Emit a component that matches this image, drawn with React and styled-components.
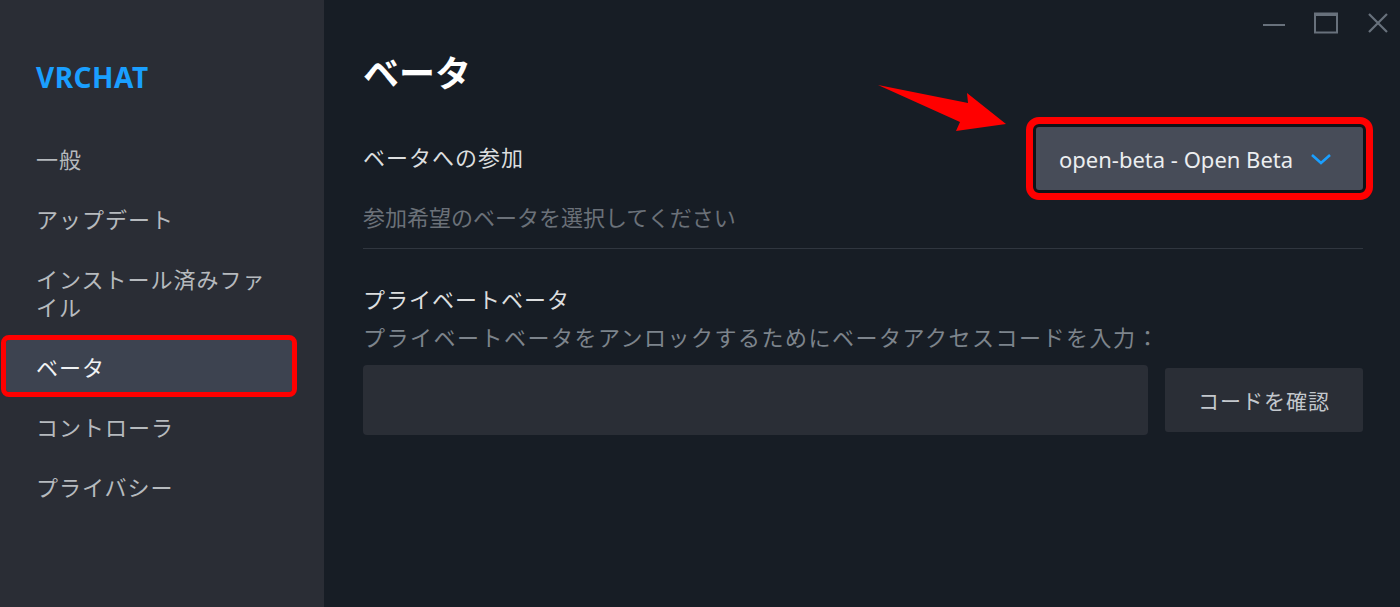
import React from "react";
import styled, { createGlobalStyle } from "styled-components";

const GlobalStyle = createGlobalStyle`
  html, body {
    margin: 0;
    padding: 0;
    background: #171d25;
  }
  body {
    font-family: "Noto Sans", "Noto Sans CJK JP", sans-serif;
  }
`;

const Window = styled.div`
  position: relative;
  width: 1400px;
  height: 607px;
  display: flex;
  overflow: hidden;
  background: #171d25;
`;

const Sidebar = styled.aside`
  width: 324px;
  flex-shrink: 0;
  background: #2a2d35;
  padding-top: 60px;
  box-sizing: border-box;
`;

const GameTitle = styled.div`
  padding-left: 36px;
  font-family: "Noto Sans", sans-serif;
  font-weight: 700;
  font-size: 28px;
  line-height: 34px;
  color: #1a9fff;
  letter-spacing: 0.5px;
`;

const Nav = styled.nav`
  margin-top: 38px;
  display: flex;
  flex-direction: column;
  gap: 8px;
`;

const NavItem = styled.div`
  width: 286px;
  margin-left: 6px;
  padding: 12px 12px 12px 30px;
  box-sizing: border-box;
  font-family: "Noto Sans CJK JP", sans-serif;
  font-size: 22px;
  line-height: 28px;
  letter-spacing: 1px;
  color: ${(p) => (p.$active ? "#f0f2f4" : "#b6babe")};
  background: ${(p) => (p.$active ? "#3d4350" : "transparent")};
  border-radius: 3px;
  outline: ${(p) => (p.$marked ? "5px solid #ff0000" : "none")};
  outline-offset: 0;
`;

const Main = styled.main`
  flex: 1;
  display: flex;
  flex-direction: column;
`;

const TitleBar = styled.div`
  height: 46px;
  display: flex;
  justify-content: flex-end;
  align-items: center;
  gap: 28px;
  padding-right: 10px;
`;

const WinButton = styled.div`
  width: 24px;
  height: 24px;
  display: flex;
  align-items: center;
  justify-content: center;
  color: #68717c;
`;

const Content = styled.div`
  padding: 0 37px 0 39px;
  display: flex;
  flex-direction: column;
`;

const PageTitle = styled.h1`
  margin: 3px 0 0;
  font-family: "Noto Sans CJK JP", sans-serif;
  font-weight: 700;
  font-size: 36px;
  line-height: 44px;
  color: #ffffff;
`;

const Row = styled.div`
  margin-top: 34px;
  display: flex;
  align-items: center;
  justify-content: space-between;
`;

const Label = styled.div`
  font-family: "Noto Sans CJK JP", sans-serif;
  font-size: 22px;
  line-height: 30px;
  letter-spacing: 1px;
  color: #dcdedf;
`;

const RowLabel = styled(Label)`
  margin-bottom: 5px;
`;

const Dropdown = styled.div`
  width: 327px;
  height: 63px;
  box-sizing: border-box;
  padding: 0 31px 0 23px;
  display: flex;
  align-items: center;
  justify-content: space-between;
  background: #474c58;
  border-radius: 3px;
  box-shadow: 0 0 0 3px #0f1318;
  outline: 7px solid #ff0000;
  outline-offset: 3px;
  font-family: "Noto Sans", sans-serif;
  font-size: 22px;
  color: #eceef0;
`;

const Hint = styled.div`
  margin-top: ${(p) => p.$mt || 0}px;
  font-family: "Noto Sans CJK JP", sans-serif;
  font-size: 22px;
  line-height: 30px;
  letter-spacing: ${(p) => p.$ls || 0}px;
  color: ${(p) => p.$color || "#6b7179"};
`;

const Divider = styled.div`
  margin-top: 17px;
  height: 1px;
  background: #30363f;
`;

const SectionLabel = styled(Label)`
  margin-top: 34px;
`;

const CodeRow = styled.div`
  margin-top: 14px;
  display: flex;
  align-items: center;
  gap: 17px;
`;

const CodeInput = styled.div`
  flex: 1;
  height: 70px;
  background: #2a2e36;
  border-radius: 4px;
`;

const CodeButton = styled.div`
  width: 198px;
  height: 64px;
  display: flex;
  align-items: center;
  justify-content: center;
  background: #2a2e36;
  border-radius: 3px;
  font-family: "Noto Sans CJK JP", sans-serif;
  font-size: 21px;
  letter-spacing: 1px;
  color: #c3c8cd;
`;

const Arrow = styled.svg`
  position: absolute;
  left: 0;
  top: 0;
  pointer-events: none;
`;

const navItems = [
  "一般",
  "アップデート",
  "インストール済みファイル",
  "ベータ",
  "コントローラ",
  "プライバシー",
];

export default function App() {
  return (
    <>
      <GlobalStyle />
      <Window>
        <Sidebar>
          <GameTitle>VRCHAT</GameTitle>
          <Nav>
            {navItems.map((item) => (
              <NavItem key={item} $active={item === "ベータ"} $marked={item === "ベータ"}>
                {item}
              </NavItem>
            ))}
          </Nav>
        </Sidebar>
        <Main>
          <TitleBar>
            <WinButton>
              <svg width="22" height="22" viewBox="0 0 22 22">
                <line x1="0" y1="13" x2="22" y2="13" stroke="currentColor" strokeWidth="2" />
              </svg>
            </WinButton>
            <WinButton>
              <svg width="24" height="22" viewBox="0 0 24 22">
                <rect x="1" y="1.5" width="22" height="19" fill="none" stroke="currentColor" strokeWidth="2" />
                <line x1="1" y1="3" x2="23" y2="3" stroke="currentColor" strokeWidth="2" />
              </svg>
            </WinButton>
            <WinButton>
              <svg width="22" height="22" viewBox="0 0 22 22">
                <path d="M2 2 L20 20 M20 2 L2 20" stroke="currentColor" strokeWidth="2.2" />
              </svg>
            </WinButton>
          </TitleBar>
          <Content>
            <PageTitle>ベータ</PageTitle>
            <Row>
              <RowLabel>ベータへの参加</RowLabel>
              <Dropdown>
                <span>open-beta - Open Beta</span>
                <svg width="22" height="14" viewBox="0 0 22 14">
                  <path d="M2 3 L11 11 L20 3" fill="none" stroke="#1a9fff" strokeWidth="2.6" />
                </svg>
              </Dropdown>
            </Row>
            <Hint $mt={11}>参加希望のベータを選択してください</Hint>
            <Divider />
            <SectionLabel>プライベートベータ</SectionLabel>
            <Hint $mt={8} $ls={1.5} $color="#7d848c">
              プライベートベータをアンロックするためにベータアクセスコードを入力：
            </Hint>
            <CodeRow>
              <CodeInput />
              <CodeButton>コードを確認</CodeButton>
            </CodeRow>
          </Content>
        </Main>
        <Arrow width="1400" height="607" viewBox="0 0 1400 607">
          <polygon points="878,85 968,103 967,93 1006,124 956,131 960,122" fill="#ff0000" />
        </Arrow>
      </Window>
    </>
  );
}
